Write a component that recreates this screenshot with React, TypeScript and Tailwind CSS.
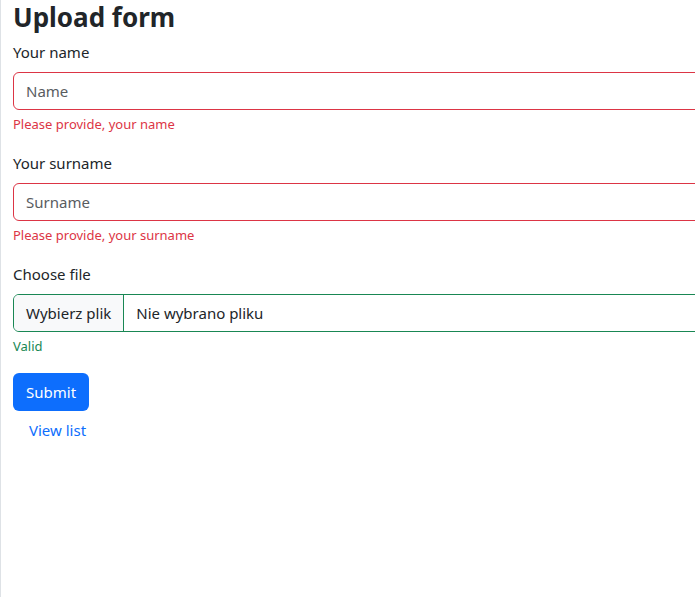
import React from 'react';

const FONT = "font-['Segoe_UI','Noto_Sans',sans-serif]";

function Field({ label, placeholder, error }: { label: string; placeholder: string; error: string }) {
  return (
    <div className="mb-4">
      <label className="block mb-2 text-[15px] leading-6 text-[#212529]">{label}</label>
      <input
        type="text"
        placeholder={placeholder}
        className="block w-full h-[38px] px-3 text-[15px] rounded-md border border-[#dc3545] bg-white text-[#212529] placeholder:text-[#595c5f] outline-none"
      />
      <div className="mt-1 text-[13px] leading-[21px] text-[#dc3545]">{error}</div>
    </div>
  );
}

export default function App() {
  return (
    <div className={`w-[695px] h-[597px] overflow-hidden bg-white ${FONT}`}>
      <div className="w-[780px] h-full border-l border-[#dee2e6] px-3 pt-[1px]">
        <h3 className="text-[26px] font-bold leading-[33px] text-[#212529] mb-[6px]">Upload form</h3>

        <Field label="Your name" placeholder="Name" error="Please provide, your name" />
        <Field label="Your surname" placeholder="Surname" error="Please provide, your surname" />

        <div className="mb-4">
          <label className="block mb-2 text-[15px] leading-6 text-[#212529]">Choose file</label>
          <div className="flex h-[38px] rounded-md border border-[#198754] overflow-hidden text-[15px] text-[#212529]">
            <span className="flex items-center px-3 bg-[#f8f9fa] border-r border-[#198754]">Wybierz plik</span>
            <span className="flex items-center px-3">Nie wybrano pliku</span>
          </div>
          <div className="mt-1 text-[13px] leading-[21px] text-[#198754]">Valid</div>
        </div>

        <button className="h-[38px] px-[13px] rounded-md bg-[#0d6efd] text-white text-[15px]">Submit</button>
        <div>
          <button className="h-[38px] pl-4 pr-3 text-[15px] text-[#0d6efd]">View list</button>
        </div>
      </div>
    </div>
  );
}
